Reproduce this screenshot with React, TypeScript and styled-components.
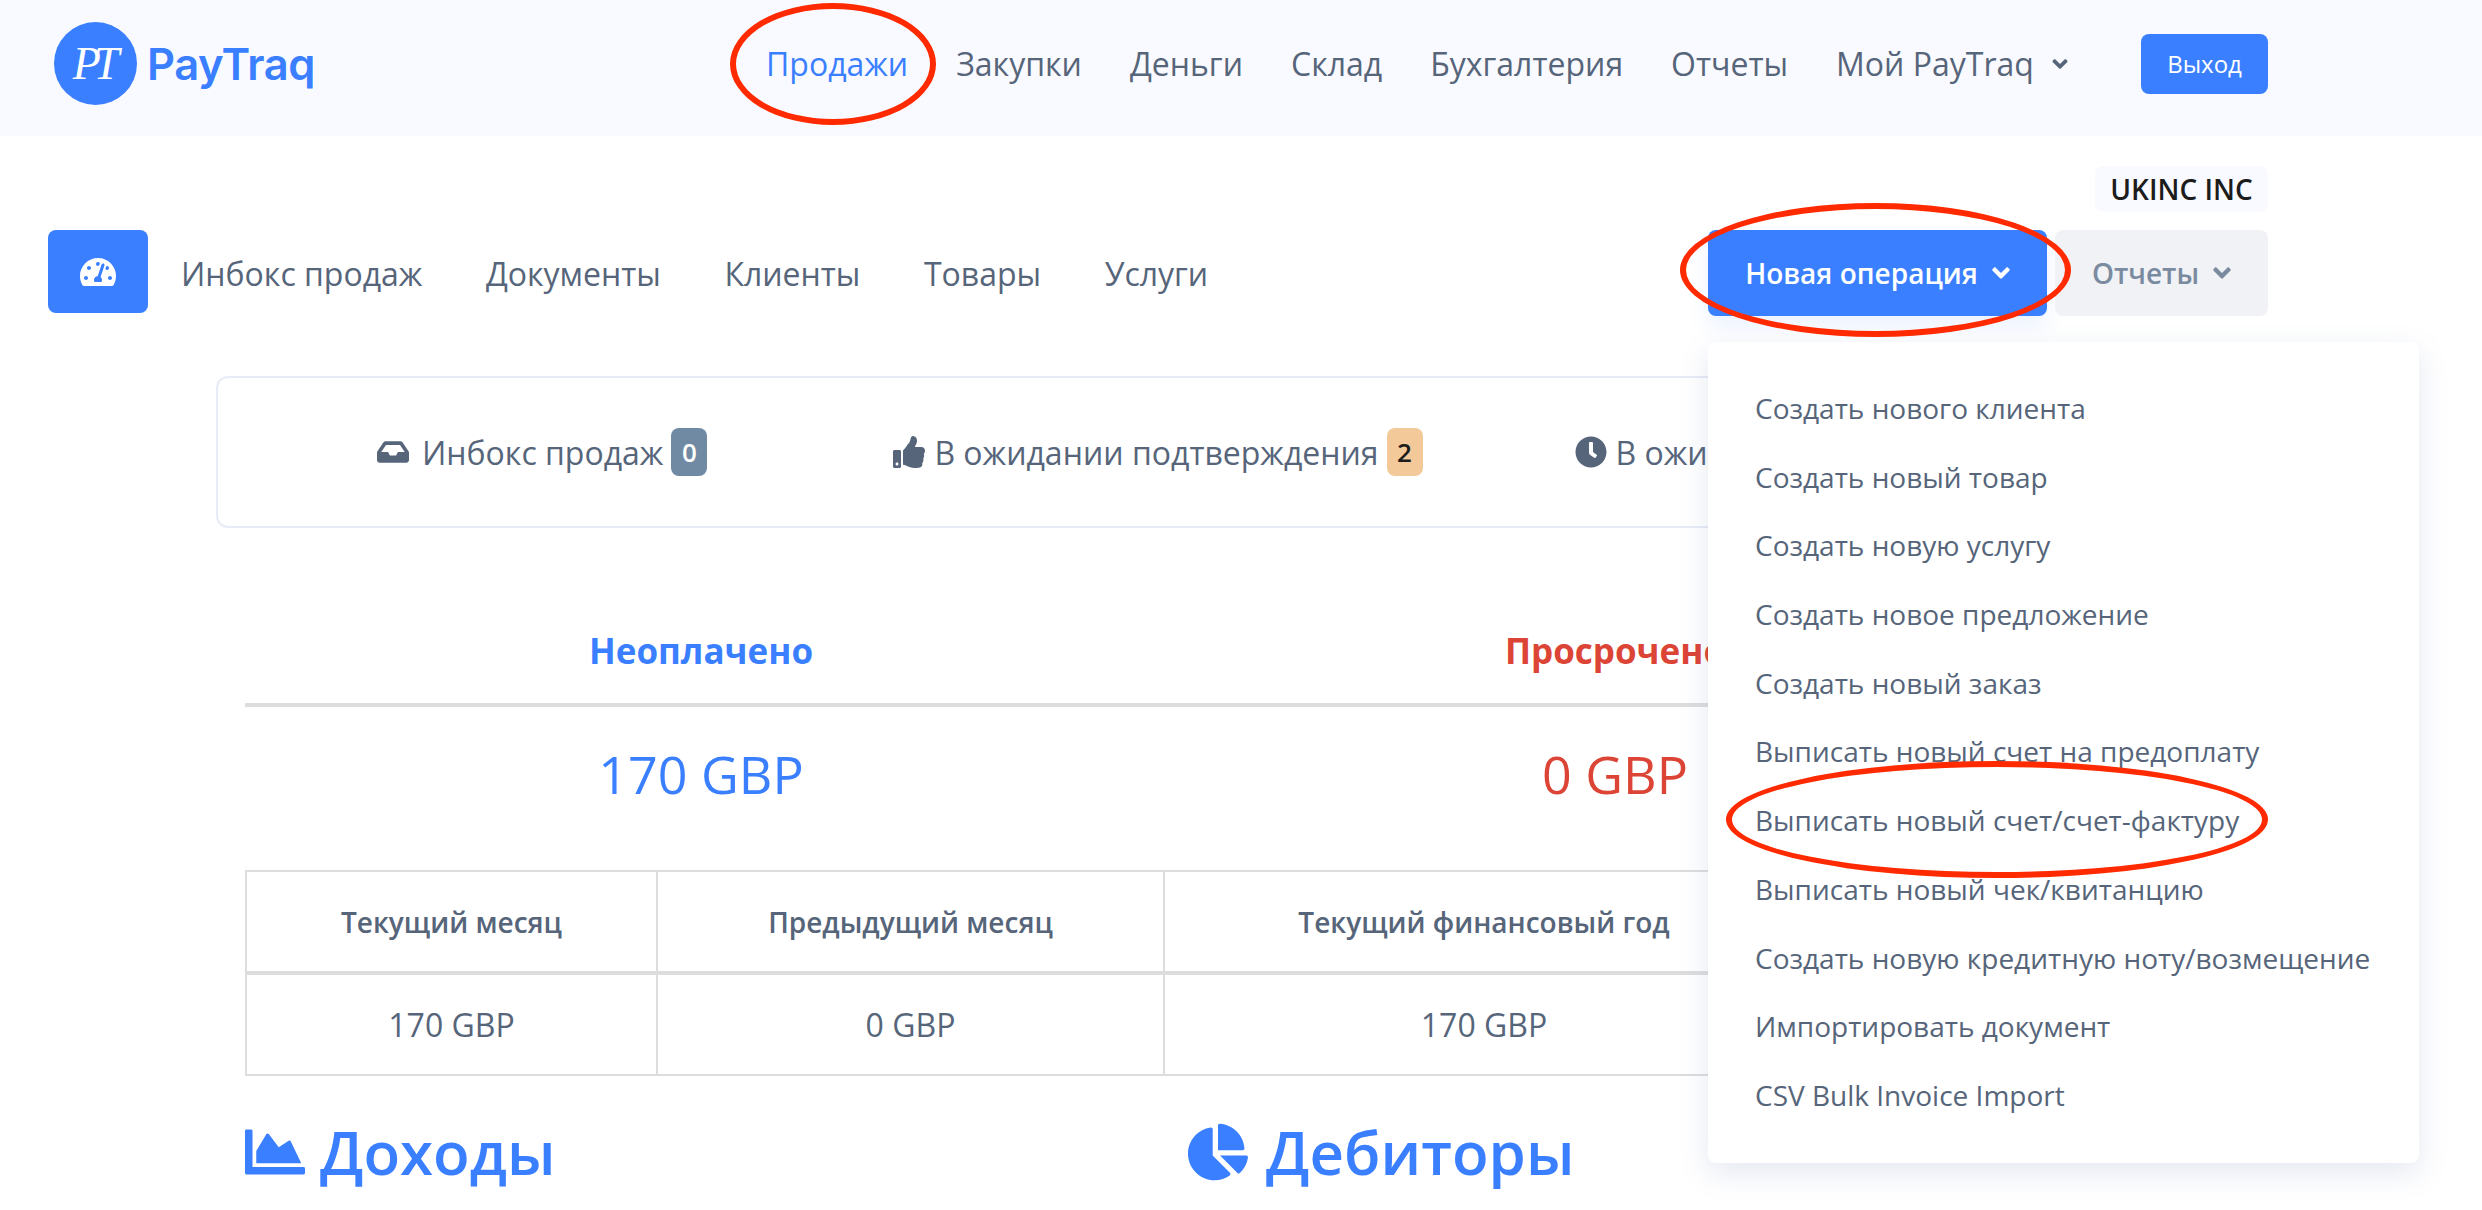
import styled, { createGlobalStyle } from 'styled-components';
import { FaAngleDown, FaChartArea, FaChartPie, FaClock, FaInbox, FaTachometerAlt, FaThumbsUp } from 'react-icons/fa';

const GlobalStyle = createGlobalStyle`
  html, body { margin: 0; padding: 0; background: #fff; }
  body { font-family: "Open Sans", "Liberation Sans", sans-serif; color: #56657a; }
  * { box-sizing: border-box; }
`;

const Page = styled.div`
  position: relative;
  width: 2482px;
  height: 1210px;
  overflow: hidden;
`;

const Header = styled.header`
  display: flex;
  align-items: center;
  height: 136px;
  padding: 0 214px 9px 54px;
  background: #f9faff;
`;

const Logo = styled.div`
  display: flex;
  align-items: center;
  gap: 10px;
  width: 260px;
  margin-right: 452px;
`;

const LogoMark = styled.div`
  display: flex;
  align-items: center;
  justify-content: center;
  flex: none;
  width: 83px;
  height: 83px;
  border-radius: 50%;
  background: #3a7fff;
  color: #fff;
  font: italic 400 46px "Liberation Serif", serif;
  letter-spacing: -7px;
  padding-right: 6px;
`;

const LogoWord = styled.span`
  color: #3a7fff;
  font: 600 43.5px Inter, sans-serif;
  letter-spacing: -0.5px;
`;

const MainNav = styled.nav`
  display: flex;
  align-items: center;
  gap: 48px;
  flex: 1;
`;

const MainLink = styled.a<{ $active?: boolean }>`
  display: flex;
  align-items: center;
  gap: 14px;
  font-size: 32px;
  color: ${p => (p.$active ? '#3a7fff' : '#56657a')};
  svg { font-size: 24px; }
`;

const LogoutButton = styled.button`
  width: 127px;
  height: 60px;
  border: none;
  border-radius: 8px;
  background: #3a7fff;
  color: #fff;
  font: 400 24px "Open Sans", sans-serif;
`;

const CompanyRow = styled.div`
  display: flex;
  justify-content: flex-end;
  padding: 30px 214px 0 0;
`;

const CompanyBadge = styled.div`
  display: flex;
  align-items: center;
  justify-content: center;
  width: 173px;
  height: 46px;
  border-radius: 8px;
  background: #f9faff;
  color: #1c1c1c;
  font-size: 28px;
  font-weight: 600;
`;

const Toolbar = styled.div`
  display: flex;
  align-items: center;
  margin-top: 18px;
  padding: 0 214px 0 48px;
`;

const DashButton = styled.div`
  display: flex;
  align-items: center;
  justify-content: center;
  width: 100px;
  height: 83px;
  margin: 0 33px 3px 0;
  border-radius: 8px;
  background: #3a7fff;
  color: #fff;
  font-size: 36px;
`;

const SubNav = styled.nav`
  display: flex;
  gap: 63.5px;
  flex: 1;
`;

const SubLink = styled.a`
  font-size: 32px;
  color: #56657a;
`;

const NewButton = styled.button`
  display: flex;
  align-items: center;
  justify-content: center;
  gap: 9px;
  width: 339px;
  height: 86px;
  margin-right: 8px;
  padding: 0 0 0 5px;
  border: none;
  border-radius: 8px;
  background: #3a7fff;
  box-shadow: 0 10px 20px rgba(58, 127, 255, 0.1);
  color: #fff;
  font: 600 28px "Open Sans", sans-serif;
`;

const ReportsButton = styled(NewButton)`
  width: 213px;
  margin-right: 0;
  background: #f1f2f5;
  box-shadow: none;
  color: #7a8a9f;
`;

const StatusPanel = styled.section`
  display: flex;
  align-items: center;
  height: 152px;
  margin: 60px 214px 0 216px;
  padding-left: 159px;
  border: 2px solid #e8ebf6;
  border-radius: 12px;
  white-space: nowrap;
`;

const StatusItem = styled.div<{ $after: number; $iconGap: number }>`
  display: flex;
  align-items: center;
  margin-right: ${p => p.$after}px;
  font-size: 32px;
  color: #56657a;
  svg { margin-right: ${p => p.$iconGap}px; font-size: 32px; }
`;

const Count = styled.span<{ $warn?: boolean }>`
  display: flex;
  align-items: center;
  justify-content: center;
  width: 36px;
  height: 48px;
  margin-left: 8px;
  border-radius: 8px;
  background: ${p => (p.$warn ? '#f3c999' : '#718aa4')};
  color: ${p => (p.$warn ? '#1c1c1c' : '#fff')};
  font-size: 26px;
  font-weight: 600;
`;

const Totals = styled.section`
  display: grid;
  grid-template-columns: 912px 916px;
  margin: 0 0 0 245px;
`;

const TotalColumn = styled.div<{ $color: string }>`
  color: ${p => p.$color};
  text-align: center;
`;

const TotalLabel = styled.div`
  height: 179px;
  padding-top: 99px;
  border-bottom: 4px solid #ddd;
  font-size: 35px;
  font-weight: 700;
  line-height: 48px;
`;

const TotalValue = styled.div`
  height: 163px;
  padding-top: 32px;
  font-size: 52px;
  line-height: 70px;
`;

const PeriodTable = styled.table`
  width: 1824px;
  margin-left: 245px;
  border-collapse: collapse;
  table-layout: fixed;
  text-align: center;

  th, td {
    border: 2px solid #ddd;
    overflow: hidden;
    white-space: nowrap;
  }
  th {
    height: 102px;
    border-bottom-width: 4px;
    font-size: 28px;
    font-weight: 600;
  }
  td {
    height: 102px;
    font-size: 32px;
  }
`;

const Charts = styled.section`
  display: grid;
  grid-template-columns: 943px 1fr;
  margin: 35px 0 0 245px;
`;

const ChartTitle = styled.h2<{ $iconGap: number }>`
  display: flex;
  align-items: center;
  gap: ${p => p.$iconGap}px;
  margin: 0;
  color: #3a7fff;
  font-size: 60px;
  font-weight: 600;
  line-height: 82px;
`;

const Menu = styled.div`
  position: absolute;
  top: 342px;
  left: 1708px;
  width: 711px;
  height: 821px;
  padding: 32px 0 0 47px;
  border-radius: 8px;
  background: #fff;
  box-shadow: 0 10px 30px rgba(90, 110, 170, 0.16);
`;

const MenuItem = styled.a`
  display: block;
  height: 68.7px;
  font-size: 28px;
  line-height: 68px;
  color: #56657a;
  white-space: nowrap;
`;

const Annotation = styled.div`
  position: absolute;
  border: 6px solid #ff2a00;
  border-radius: 50%;
`;

const SalesMark = styled(Annotation)`
  top: 3px;
  left: 730px;
  width: 206px;
  height: 122px;
`;

const NewOperationMark = styled(Annotation)`
  top: 203px;
  left: 1680px;
  width: 391px;
  height: 134px;
`;

const InvoiceMark = styled(Annotation)`
  top: 761px;
  left: 1726px;
  width: 542px;
  height: 117px;
`;

const mainLinks = ['Закупки', 'Деньги', 'Склад', 'Бухгалтерия', 'Отчеты'];
const subLinks = ['Инбокс продаж', 'Документы', 'Клиенты', 'Товары', 'Услуги'];
const menuItems = [
  'Создать нового клиента',
  'Создать новый товар',
  'Создать новую услугу',
  'Создать новое предложение',
  'Создать новый заказ',
  'Выписать новый счет на предоплату',
  'Выписать новый счет/счет-фактуру',
  'Выписать новый чек/квитанцию',
  'Создать новую кредитную ноту/возмещение',
  'Импортировать документ',
  'CSV Bulk Invoice Import',
];

const App = () => (
  <Page>
    <GlobalStyle />
    <Header>
      <Logo>
        <LogoMark>PT</LogoMark>
        <LogoWord>PayTraq</LogoWord>
      </Logo>
      <MainNav>
        <MainLink $active>Продажи</MainLink>
        {mainLinks.map(link => (
          <MainLink key={link}>{link}</MainLink>
        ))}
        <MainLink>
          Мой PayTraq <FaAngleDown />
        </MainLink>
      </MainNav>
      <LogoutButton>Выход</LogoutButton>
    </Header>

    <CompanyRow>
      <CompanyBadge>UKINC INC</CompanyBadge>
    </CompanyRow>

    <Toolbar>
      <DashButton>
        <FaTachometerAlt />
      </DashButton>
      <SubNav>
        {subLinks.map(link => (
          <SubLink key={link}>{link}</SubLink>
        ))}
      </SubNav>
      <NewButton>
        Новая операция <FaAngleDown />
      </NewButton>
      <ReportsButton>
        Отчеты <FaAngleDown />
      </ReportsButton>
    </Toolbar>

    <StatusPanel>
      <StatusItem $after={186} $iconGap={13}>
        <FaInbox />
        Инбокс продаж
        <Count>0</Count>
      </StatusItem>
      <StatusItem $after={152} $iconGap={9}>
        <FaThumbsUp />
        В ожидании подтверждения
        <Count $warn>2</Count>
      </StatusItem>
      <StatusItem $after={0} $iconGap={9}>
        <FaClock />
        В ожидании
      </StatusItem>
    </StatusPanel>

    <Totals>
      <TotalColumn $color="#3a7fff">
        <TotalLabel>Неоплачено</TotalLabel>
        <TotalValue>170 GBP</TotalValue>
      </TotalColumn>
      <TotalColumn $color="#dc4436">
        <TotalLabel>Просрочено</TotalLabel>
        <TotalValue>0 GBP</TotalValue>
      </TotalColumn>
    </Totals>

    <PeriodTable>
      <colgroup>
        <col width={411} />
        <col width={507} />
        <col width={640} />
        <col width={266} />
      </colgroup>
      <thead>
        <tr>
          <th>Текущий месяц</th>
          <th>Предыдущий месяц</th>
          <th>Текущий финансовый год</th>
          <th>Прошлый год</th>
        </tr>
      </thead>
      <tbody>
        <tr>
          <td>170 GBP</td>
          <td>0 GBP</td>
          <td>170 GBP</td>
          <td>0 GBP</td>
        </tr>
      </tbody>
    </PeriodTable>

    <Charts>
      <ChartTitle $iconGap={15}>
        <FaChartArea />
        Доходы
      </ChartTitle>
      <ChartTitle $iconGap={18}>
        <FaChartPie />
        Дебиторы
      </ChartTitle>
    </Charts>

    <Menu>
      {menuItems.map(item => (
        <MenuItem key={item}>{item}</MenuItem>
      ))}
    </Menu>

    <SalesMark />
    <NewOperationMark />
    <InvoiceMark />
  </Page>
);

export default App;
